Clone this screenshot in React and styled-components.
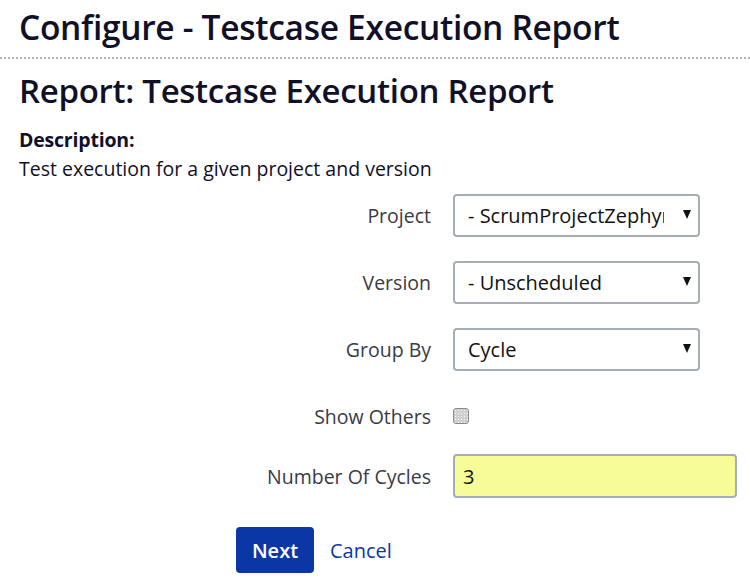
import React, { useState } from 'react';
import styled, { createGlobalStyle } from 'styled-components';

const GlobalStyle = createGlobalStyle`
  body {
    margin: 0;
    background: #fff;
    font-family: "Open Sans", "Noto Sans", sans-serif;
    color: #101028;
  }
`

const Header = styled.header`
  padding: 4px 19px 7px 19px;
  border-bottom: 2px dotted #b4b4b4;
  h1 {
    margin: 0;
    font-size: 33.5px;
    font-weight: 600;
    line-height: 46px;
    letter-spacing: -0.3px;
  }
`

const Content = styled.main`
  padding: 9px 19px 0 19px;
`

const ReportTitle = styled.h2`
  margin: 0 0 12px 0;
  font-size: 33px;
  font-weight: 600;
  line-height: 46px;
  letter-spacing: -0.3px;
`

const DescLabel = styled.div`
  font-size: 19.5px;
  font-weight: 700;
  line-height: 28px;
  letter-spacing: -0.2px;
`

const DescText = styled.p`
  margin: 0 0 10px 0;
  font-size: 19.5px;
  line-height: 30px;
`

const Form = styled.form`
  display: flex;
  flex-direction: column;
`

const Row = styled.div`
  display: flex;
  align-items: center;
  gap: 22px;
  height: ${(p) => p.$height || 43}px;
  margin-bottom: ${(p) => p.$gap ?? 24}px;
  & > * {
    flex-shrink: 0;
  }
`

const Label = styled.label`
  width: 412px;
  text-align: right;
  font-size: 19.5px;
  color: #3a3a44;
`

const SelectWrap = styled.div`
  position: relative;
  width: 247px;
  height: 43px;
  &::after {
    content: "";
    position: absolute;
    right: 9px;
    top: 16px;
    border-left: 4.5px solid transparent;
    border-right: 4.5px solid transparent;
    border-top: 9px solid #111;
    pointer-events: none;
  }
`

const Select = styled.select`
  appearance: none;
  width: 100%;
  height: 100%;
  box-sizing: border-box;
  padding: 0 34px 0 13px;
  border: 2px solid #a5adb6;
  border-radius: 4px;
  background: #fff;
  font-family: inherit;
  font-size: 20px;
  color: #111;
  outline: none;
`

const Checkbox = styled.input`
  appearance: none;
  margin: 0;
  width: 16px;
  height: 16px;
  box-sizing: border-box;
  border: 1px solid #8a8a8a;
  border-radius: 3px;
  background-color: #cfcfcf;
  background-image: radial-gradient(#f4f4f4 0.8px, transparent 0.9px);
  background-size: 3px 3px;
`

const TextInput = styled.input`
  width: 284px;
  height: 44px;
  box-sizing: border-box;
  padding: 0 8px;
  border: 2px solid #a5adb6;
  border-radius: 4px;
  background: #f8fc98;
  font-family: inherit;
  font-size: 20px;
  color: #111;
  outline: none;
`

const Actions = styled.div`
  display: flex;
  align-items: center;
  gap: 16px;
  margin-left: 217px;
`

const PrimaryButton = styled.button`
  width: 78px;
  height: 46px;
  border: none;
  border-radius: 4px;
  background: #0b37a6;
  color: #fff;
  font-family: inherit;
  font-size: 20px;
  font-weight: 600;
  cursor: pointer;
`

const LinkButton = styled.a`
  font-size: 20px;
  color: #0b37a6;
  text-decoration: none;
  cursor: pointer;
`

export default function App() {
  const [cycles, setCycles] = useState('3');
  const [showOthers, setShowOthers] = useState(false);

  return (
    <>
      <GlobalStyle />
      <Header>
        <h1>Configure - Testcase Execution Report</h1>
      </Header>
      <Content>
        <ReportTitle>Report: Testcase Execution Report</ReportTitle>
        <DescLabel>Description:</DescLabel>
        <DescText>Test execution for a given project and version</DescText>

        <Form onSubmit={(e) => e.preventDefault()}>
          <Row>
            <Label>Project</Label>
            <SelectWrap>
              <Select defaultValue="scrum">
                <option value="scrum">- ScrumProjectZephyr</option>
              </Select>
            </SelectWrap>
          </Row>
          <Row>
            <Label>Version</Label>
            <SelectWrap>
              <Select defaultValue="unscheduled">
                <option value="unscheduled">- Unscheduled</option>
              </Select>
            </SelectWrap>
          </Row>
          <Row>
            <Label>Group By</Label>
            <SelectWrap>
              <Select defaultValue="cycle">
                <option value="cycle">Cycle</option>
              </Select>
            </SelectWrap>
          </Row>
          <Row $height={42} $gap={17}>
            <Label>Show Others</Label>
            <Checkbox
              type="checkbox"
              checked={showOthers}
              onChange={(e) => setShowOthers(e.target.checked)}
            />
          </Row>
          <Row $height={44} $gap={29}>
            <Label>Number Of Cycles</Label>
            <TextInput value={cycles} onChange={(e) => setCycles(e.target.value)} />
          </Row>
          <Actions>
            <PrimaryButton type="submit">Next</PrimaryButton>
            <LinkButton>Cancel</LinkButton>
          </Actions>
        </Form>
      </Content>
    </>
  );
}
